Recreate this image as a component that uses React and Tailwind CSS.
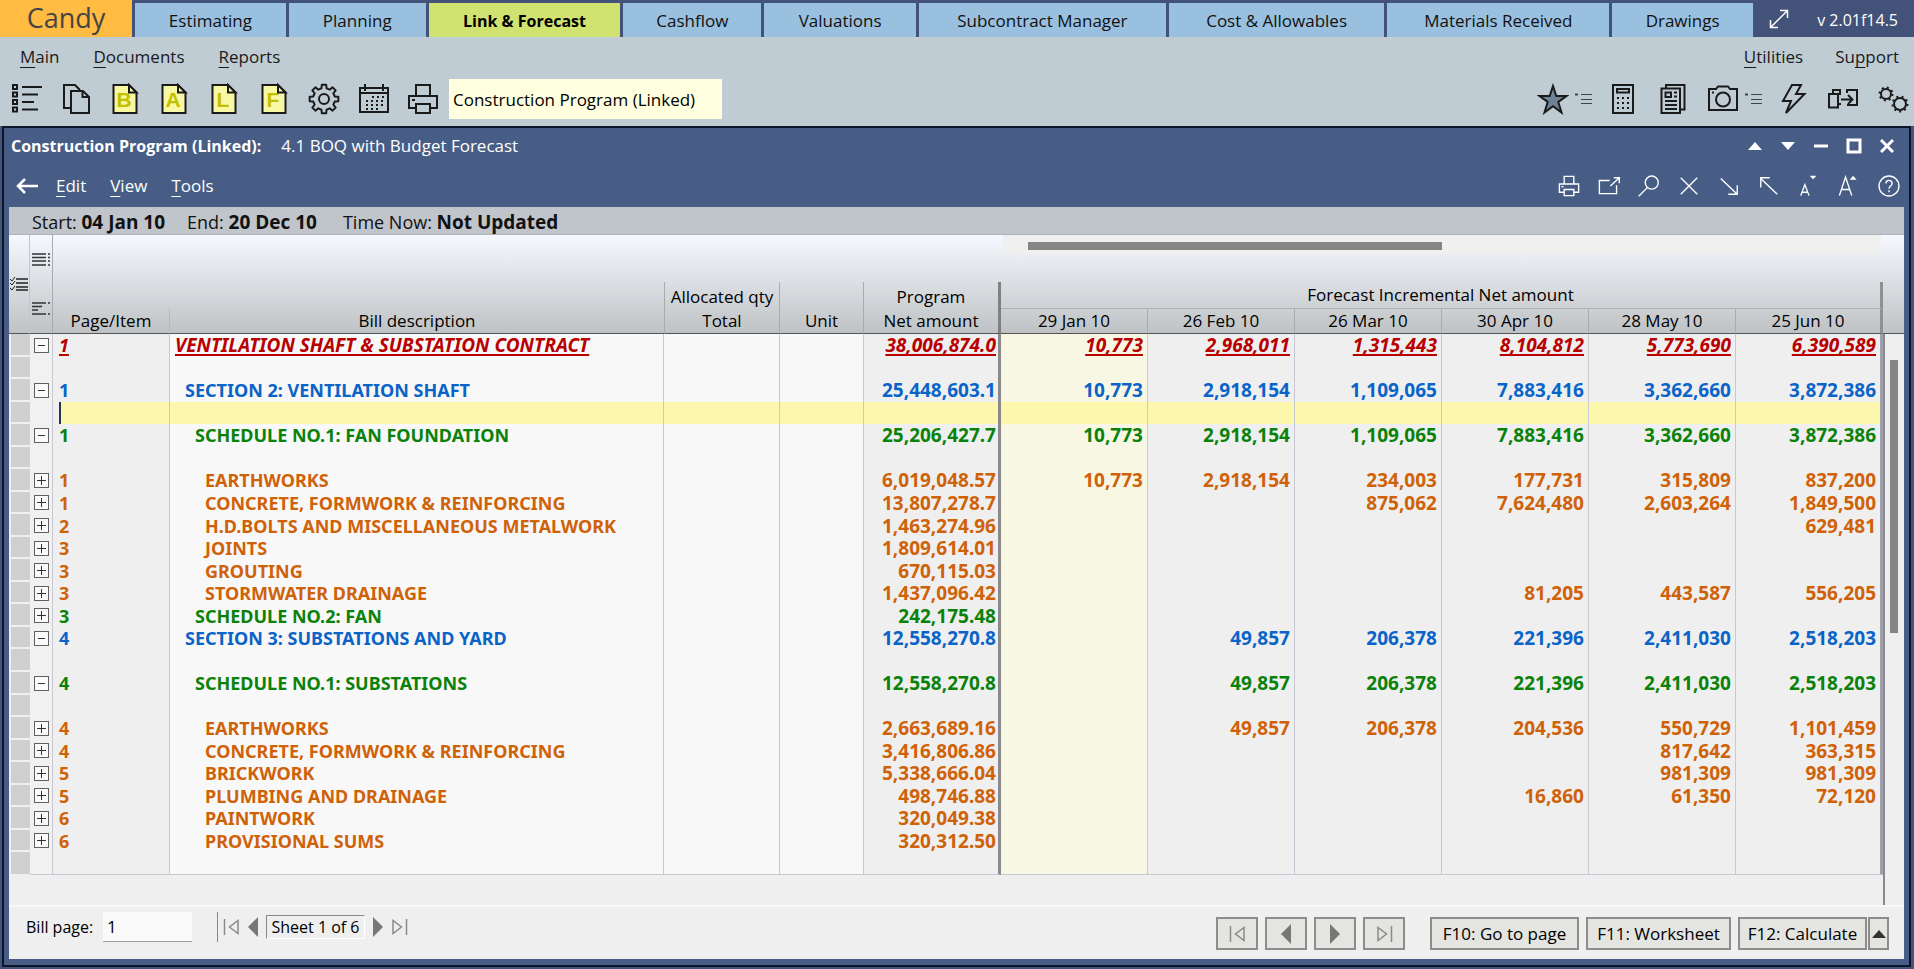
import { useState } from "react";

const tabs = [
  { name: "Estimating", size: "flex-[151]" },
  { name: "Planning", size: "flex-[137]" },
  { name: "Link & Forecast", size: "flex-[192]" },
  { name: "Cashflow", size: "flex-[138]" },
  { name: "Valuations", size: "flex-[152]" },
  { name: "Subcontract Manager", size: "flex-[247]" },
  { name: "Cost & Allowables", size: "flex-[216]" },
  { name: "Materials Received", size: "flex-[222]" },
  { name: "Drawings", size: "flex-[141]" },
];

const months = ["29 Jan 10", "26 Feb 10", "26 Mar 10", "30 Apr 10", "28 May 10", "25 Jun 10"];

// level: 0 contract, 1 section, 2 schedule, 3 trade
const rows = [
  { open: true, page: "1", level: 0, text: "VENTILATION SHAFT & SUBSTATION CONTRACT", net: "38,006,874.0", values: ["10,773", "2,968,011", "1,315,443", "8,104,812", "5,773,690", "6,390,589"] },
  {},
  { open: true, page: "1", level: 1, text: "SECTION 2: VENTILATION SHAFT", net: "25,448,603.1", values: ["10,773", "2,918,154", "1,109,065", "7,883,416", "3,362,660", "3,872,386"] },
  { cursor: true },
  { open: true, page: "1", level: 2, text: "SCHEDULE NO.1: FAN FOUNDATION", net: "25,206,427.7", values: ["10,773", "2,918,154", "1,109,065", "7,883,416", "3,362,660", "3,872,386"] },
  {},
  { page: "1", level: 3, text: "EARTHWORKS", net: "6,019,048.57", values: ["10,773", "2,918,154", "234,003", "177,731", "315,809", "837,200"] },
  { page: "1", level: 3, text: "CONCRETE, FORMWORK & REINFORCING", net: "13,807,278.7", values: ["", "", "875,062", "7,624,480", "2,603,264", "1,849,500"] },
  { page: "2", level: 3, text: "H.D.BOLTS AND MISCELLANEOUS METALWORK", net: "1,463,274.96", values: ["", "", "", "", "", "629,481"] },
  { page: "3", level: 3, text: "JOINTS", net: "1,809,614.01" },
  { page: "3", level: 3, text: "GROUTING", net: "670,115.03" },
  { page: "3", level: 3, text: "STORMWATER DRAINAGE", net: "1,437,096.42", values: ["", "", "", "81,205", "443,587", "556,205"] },
  { page: "3", level: 2, text: "SCHEDULE NO.2: FAN", net: "242,175.48" },
  { open: true, page: "4", level: 1, text: "SECTION 3: SUBSTATIONS AND YARD", net: "12,558,270.8", values: ["", "49,857", "206,378", "221,396", "2,411,030", "2,518,203"] },
  {},
  { open: true, page: "4", level: 2, text: "SCHEDULE NO.1: SUBSTATIONS", net: "12,558,270.8", values: ["", "49,857", "206,378", "221,396", "2,411,030", "2,518,203"] },
  {},
  { page: "4", level: 3, text: "EARTHWORKS", net: "2,663,689.16", values: ["", "49,857", "206,378", "204,536", "550,729", "1,101,459"] },
  { page: "4", level: 3, text: "CONCRETE, FORMWORK & REINFORCING", net: "3,416,806.86", values: ["", "", "", "", "817,642", "363,315"] },
  { page: "5", level: 3, text: "BRICKWORK", net: "5,338,666.04", values: ["", "", "", "", "981,309", "981,309"] },
  { page: "5", level: 3, text: "PLUMBING AND DRAINAGE", net: "498,746.88", values: ["", "", "", "16,860", "61,350", "72,120"] },
  { page: "6", level: 3, text: "PAINTWORK", net: "320,049.38" },
  { page: "6", level: 3, text: "PROVISIONAL SUMS", net: "320,312.50" },
  {},
];

const levelColor = [
  "text-[#b80000] italic underline underline-offset-2 decoration-2",
  "text-[#0a64c8]",
  "text-[#0a820a]",
  "text-[#cf6208]",
];
const levelIndent = ["pl-[5px] text-[19px]", "pl-[15px]", "pl-[25px]", "pl-[35px]"];

// Outline of a cog wheel around (cx, cy)
const cogPath = (cx, cy, teeth, outer, inner) => {
  const step = (Math.PI * 2) / teeth;
  const points = [];
  for (let i = 0; i < teeth; i++) {
    const a = i * step - Math.PI / 2;
    [
      [-0.3, inner],
      [-0.19, outer],
      [0.19, outer],
      [0.3, inner],
    ].forEach(([k, r]) => {
      points.push(
        `${(cx + r * Math.cos(a + k * step)).toFixed(2)} ${(cy + r * Math.sin(a + k * step)).toFixed(2)}`,
      );
    });
  }
  return `M${points.join("L")}Z`;
};

const Icon = ({ children, className = "size-8" }) => (
  <svg viewBox="0 0 32 32" className={`${className} shrink-0`} fill="none" stroke="currentColor" strokeWidth="2">
    {children}
  </svg>
);

const ListIcon = () => (
  <Icon>
    {[3.5, 11, 18.5, 26].map((y) => (
      <rect key={y} x="2" y={y - 1.5} width="4" height="4" />
    ))}
    <path d="M11 4H31M11 11.5H27M11 19H23M11 26.5H27" />
  </Icon>
);

const CopyIcon = () => (
  <Icon>
    <path d="M11 25H4V2H15L20 7M11 8H23L29 14V30H11ZM22.5 8V14H29" />
  </Icon>
);

const SheetIcon = ({ letter }) => (
  <Icon>
    <path d="M3.5 2H19L26.5 9.5V30H3.5Z" fill="#f8f8a4" />
    <text x="14" y="23.5" textAnchor="middle" fill="#c2c000" stroke="none" className="font-['Liberation_Sans',sans-serif] text-[21px] font-bold">
      {letter}
    </text>
    <path d="M19 2V9.5H26.5Z" fill="#f8f8a4" />
  </Icon>
);

const GearIcon = () => (
  <Icon>
    <path d={cogPath(16, 16, 8, 14.5, 11)} strokeLinejoin="round" />
    <circle cx="16" cy="16" r="5" />
  </Icon>
);

const CalendarIcon = () => (
  <Icon>
    <path d="M2 5H30V29H2ZM2 10H30M7 1V8M25 1V8" />
    <path d="M14 14H26M8 18H26M8 22H26M8 26H20" strokeDasharray="2 3" />
  </Icon>
);

const PrinterIcon = ({ className }) => (
  <Icon className={className}>
    <path d="M9 13V2H23V13M9 25H2V13H30V25H23M9 21H23V30H9Z" />
    <path d="M5 17H8" />
  </Icon>
);

const StarIcon = () => (
  <Icon>
    <path d="M16 3L19.3 13H29.5L21.3 19L24.5 29.5L16 23.2L7.5 29.5L10.7 19L2.5 13H12.7Z" fill="#6e8295" />
  </Icon>
);

const SmallListIcon = () => (
  <svg viewBox="0 0 17 12" className="h-3 w-[17px] shrink-0" fill="none" stroke="#3d464c" strokeWidth="1">
    <path d="M6 1.500H17M6 6.500H17M6 10.500H17" />
    <path d="M0 1.500H3" strokeWidth="2" />
  </svg>
);

const CalculatorIcon = () => (
  <Icon>
    <path d="M6 2H26V30H6ZM10 6H22V9.500H10Z" />
    <path d="M10 15H24M10 20H24M10 25H24" strokeDasharray="2 3" />
  </Icon>
);

const NewsIcon = () => (
  <Icon>
    <path d="M4.500 5.500H23V30H4.500ZM9 5V2H27.500V26.500H23" />
    <path d="M8.500 9.500H14V14H8.500ZM17 9.500H20M17 13.500H20M8 18H20M8 22H20M8 26H20" />
  </Icon>
);

const CameraIcon = () => (
  <Icon>
    <path d="M2 6H9L11 3.500H21L23 6H30V27H2Z" />
    <circle cx="16" cy="16.500" r="7" />
    <path d="M5 9.500H7" />
  </Icon>
);

const BoltIcon = () => (
  <Icon>
    <path d="M15 2H24L19 11H27.500L9 30L14 18H6Z" />
  </Icon>
);

const TransferIcon = () => (
  <Icon>
    <path d="M2 11H11V24.500H2ZM6 11V7H13V12M11 21H14M14 16.500H25M21 12L25.500 16.500L21 21M20 10V7H30V22H20" />
  </Icon>
);

const GearsIcon = () => (
  <Icon>
    <circle cx="9" cy="11" r="5" />
    <circle cx="9" cy="11" r="6.500" strokeDasharray="2 3.100" />
    <circle cx="23" cy="21" r="6" />
    <circle cx="23" cy="21" r="7.500" strokeDasharray="2 3.236" />
  </Icon>
);

const IconButton = ({ label, className = "w-8", children }) => (
  <button type="button" aria-label={label} className={`${className} flex h-8 items-center justify-center`}>
    {children}
  </button>
);

const MenuItem = ({ before = "", hot, rest }) => (
  <button type="button" className="leading-6">
    {before}
    <span className="underline underline-offset-4">{hot}</span>
    {rest}
  </button>
);

const FirstIcon = () => (
  <svg viewBox="0 0 17 16" className="h-4 w-[17px]" fill="none" stroke="#8a8a8a" strokeWidth="1.500">
    <path d="M1.500 0V16M15 1.500V14.500L6.500 8Z" />
  </svg>
);

const LastIcon = () => (
  <svg viewBox="0 0 17 16" className="h-4 w-[17px]" fill="none" stroke="#8a8a8a" strokeWidth="1.500">
    <path d="M15.500 0V16M2 1.500V14.500L10.500 8Z" />
  </svg>
);

const PrevIcon = () => (
  <svg viewBox="0 0 10 20" className="h-5 w-[10px]" fill="#777">
    <path d="M10 0V20L0 10Z" />
  </svg>
);

const NextIcon = () => (
  <svg viewBox="0 0 10 20" className="h-5 w-[10px]" fill="#777">
    <path d="M0 0V20L10 10Z" />
  </svg>
);

const TopBar = () => (
  <nav className="flex h-[37px] bg-[#435278] text-[17px] text-[#111]">
    <a href="#candy" className="flex w-[132px] items-center justify-center bg-[#ffbb42] text-[27px] font-medium text-[#444]">
      Candy
    </a>
    <div className="ml-[3px] flex flex-1 gap-[3px] pt-[3px]">
      {tabs.map((tab) => (
        <a
          key={tab.name}
          href="#tab"
          className={`${tab.size} flex items-center justify-center pt-px whitespace-nowrap ${
            tab.name === "Link & Forecast" ? "bg-[#d0e270] text-[16px] font-bold text-black" : "bg-[#99c0de]"
          }`}
        >
          {tab.name}
        </a>
      ))}
    </div>
    <div className="flex w-[161px] items-center justify-between pr-4 pl-4 text-[16px] text-white">
      <button type="button" aria-label="Expand">
        <svg viewBox="0 0 20 20" className="size-5" fill="none" stroke="currentColor" strokeWidth="1.500">
          <path d="M2 18L18 2M11 1.500H18.500V9M1.500 11V18.500H9" />
        </svg>
      </button>
      <span className="pt-[3px]">v 2.01f14.5</span>
    </div>
  </nav>
);

const Toolbar = () => {
  const [program, setProgram] = useState("Construction Program (Linked)");

  return (
    <div className="flex h-[89px] flex-col bg-[#c0ccd4] text-[17px] text-[#1a1a1a]">
      <div className="flex h-10 items-center justify-between pr-[15px] pl-5">
        <div className="flex gap-[34px]">
          <MenuItem hot="M" rest="ain" />
          <MenuItem hot="D" rest="ocuments" />
          <MenuItem hot="R" rest="eports" />
        </div>
        <div className="flex gap-8">
          <MenuItem hot="U" rest="tilities" />
          <MenuItem before="Su" hot="p" rest="port" />
        </div>
      </div>
      <div className="flex h-[44px] items-center justify-between pr-[5px] pl-[2px]">
        <div className="flex items-center">
          <div className="flex w-[446px] *:flex-1">
            <IconButton label="List"><ListIcon /></IconButton>
            <IconButton label="Documents"><CopyIcon /></IconButton>
            <IconButton label="Bill"><SheetIcon letter="B" /></IconButton>
            <IconButton label="Activities"><SheetIcon letter="A" /></IconButton>
            <IconButton label="Links"><SheetIcon letter="L" /></IconButton>
            <IconButton label="Forecast"><SheetIcon letter="F" /></IconButton>
            <IconButton label="Settings"><GearIcon /></IconButton>
            <IconButton label="Calendar"><CalendarIcon /></IconButton>
            <IconButton label="Print"><PrinterIcon /></IconButton>
          </div>
          <input
            aria-label="Program"
            value={program}
            onChange={(e) => setProgram(e.target.value)}
            className="ml-px h-10 w-[273px] bg-[#ffffdf] px-1 text-black outline-none"
          />
        </div>
        <div className="flex gap-[18px]">
          <div className="flex w-[52px] items-center gap-[6px]">
            <IconButton label="Favourites"><StarIcon /></IconButton>
            <SmallListIcon />
          </div>
          <IconButton label="Calculator"><CalculatorIcon /></IconButton>
          <IconButton label="News"><NewsIcon /></IconButton>
          <div className="flex w-[52px] items-center gap-[6px]">
            <IconButton label="Snapshot"><CameraIcon /></IconButton>
            <SmallListIcon />
          </div>
          <IconButton label="Quick"><BoltIcon /></IconButton>
          <IconButton label="Transfer"><TransferIcon /></IconButton>
          <IconButton label="Options"><GearsIcon /></IconButton>
        </div>
      </div>
    </div>
  );
};

const WindowHeader = () => (
  <header className="text-[17px] text-white">
    <div className="flex h-9 items-center justify-between pr-[6px]">
      <div className="flex items-baseline gap-5 pl-[7px]">
        <h1 className="text-[16px] font-bold">Construction Program (Linked):</h1>
        <span>4.1 BOQ with Budget Forecast</span>
      </div>
      <div className="flex">
        <IconButton label="Roll up" className="w-[33px]">
          <svg viewBox="0 0 14 14" className="size-[14px]" fill="currentColor"><path d="M0 11L7 3L14 11Z" /></svg>
        </IconButton>
        <IconButton label="Roll down" className="w-[33px]">
          <svg viewBox="0 0 14 14" className="size-[14px]" fill="currentColor"><path d="M0 3L7 11L14 3Z" /></svg>
        </IconButton>
        <IconButton label="Minimise" className="w-[33px]">
          <svg viewBox="0 0 14 14" className="size-[14px]" stroke="currentColor" strokeWidth="3"><path d="M0 7H14" /></svg>
        </IconButton>
        <IconButton label="Maximise" className="w-[33px]">
          <svg viewBox="0 0 16 16" className="size-4" fill="none" stroke="currentColor" strokeWidth="3"><path d="M2 2H14V14H2Z" /></svg>
        </IconButton>
        <IconButton label="Close" className="w-[33px]">
          <svg viewBox="0 0 14 14" className="size-[14px]" stroke="currentColor" strokeWidth="3"><path d="M1 1L13 13M13 1L1 13" /></svg>
        </IconButton>
      </div>
    </div>
    <div className="flex h-[43px] items-center justify-between">
      <div className="flex items-center gap-6 pl-3">
        <div className="flex items-center gap-[18px]">
          <button type="button" aria-label="Back">
            <svg viewBox="0 0 22 16" className="h-4 w-[22px]" fill="none" stroke="currentColor" strokeWidth="2.500">
              <path d="M1.500 8H22M9 1L2 8L9 15" />
            </svg>
          </button>
          <MenuItem hot="E" rest="dit" />
        </div>
        <MenuItem hot="V" rest="iew" />
        <MenuItem hot="T" rest="ools" />
      </div>
      <div className="flex">
        <IconButton label="Print" className="w-10"><PrinterIcon className="size-[22px]" /></IconButton>
        <IconButton label="Open in window" className="w-10">
          <Icon className="size-[22px]"><path d="M17 8H2V27H27V15M18 16L31 4M23 4H31V12" /></Icon>
        </IconButton>
        <IconButton label="Find" className="w-10">
          <Icon className="size-[22px]"><circle cx="20" cy="11" r="9.500" /><path d="M14 18L1 31" /></Icon>
        </IconButton>
        <IconButton label="Clear" className="w-10">
          <Icon className="size-[22px]"><path d="M4 4L28 28M28 4L4 28" /></Icon>
        </IconButton>
        <IconButton label="Expand" className="w-10">
          <Icon className="size-[22px]"><path d="M4 5L28 28M28 15V28H15" /></Icon>
        </IconButton>
        <IconButton label="Collapse" className="w-10">
          <Icon className="size-[22px]"><path d="M28 28L4 5M4 18V4H17" /></Icon>
        </IconButton>
        <IconButton label="Smaller text" className="w-10">
          <Icon className="size-[22px]">
            <path d="M4 30L10 14L16 30M6 25H14" />
            <path d="M17 1H27L22 6Z" fill="currentColor" stroke="none" />
          </Icon>
        </IconButton>
        <IconButton label="Larger text" className="w-10">
          <Icon className="size-[22px]">
            <path d="M2 30L11 3L20 30M5 21H17" />
            <path d="M17 7H27L22 1Z" fill="currentColor" stroke="none" />
          </Icon>
        </IconButton>
        <IconButton label="Help" className="w-10">
          <Icon className="size-[22px]">
            <circle cx="16" cy="16" r="14.500" />
            <path d="M11.500 12.500C11.500 6 20.500 6.500 20.500 12.500C20.500 16 16 16 16 20M16 22V25" />
          </Icon>
        </IconButton>
      </div>
    </div>
  </header>
);

const InfoBar = () => (
  <div className="flex h-7 items-center gap-[22px] border-b border-[#b0b2b8] bg-[#c0c4cb] pt-1 pl-[23px] text-[18px] text-[#111] [&_b]:text-[19px]">
    <span>Start: <b>04 Jan 10</b></span>
    <span>End: <b>20 Dec 10</b></span>
    <span className="ml-1">Time Now: <b>Not Updated</b></span>
  </div>
);

const BillTable = () => (
  <table className="h-full w-full table-fixed border-separate border-spacing-0">
    <colgroup>
      <col className="w-[21px]" />
      <col className="w-[23px]" />
      <col className="w-[117px]" />
      <col />
      <col className="w-[116px]" />
      <col className="w-[84px]" />
      <col className="w-[137px]" />
      <col className="w-[147px]" />
      <col className="w-[147px]" />
      <col className="w-[147px]" />
      <col className="w-[147px]" />
      <col className="w-[147px]" />
      <col className="w-[147px]" />
    </colgroup>
    <thead className="text-[17px] leading-6 text-black [&_th]:font-medium">
      <tr className="h-[47px]">
        <td rowSpan={3} className="border-r border-b border-r-[#c4c6ca] border-b-[#555]">
          <button type="button" aria-label="Select rows" className="flex w-full justify-center">
            <svg viewBox="0 0 18 14" className="h-[14px] w-[18px]" stroke="#222" strokeWidth="1.500">
              <path d="M6 2H18M6 6H18M6 10H18M6 13H18" />
              <path d="M0 2L2 4L5 0M0 6L2 8L5 4M0 11L2 13L5 9" fill="none" strokeWidth="1" />
            </svg>
          </button>
        </td>
        <td rowSpan={3} className="border-r border-b border-r-[#a8abb0] border-b-[#555]">
          <div className="flex flex-col items-center gap-9">
            <button type="button" aria-label="Expand all">
              <svg viewBox="0 0 18 13" className="h-[13px] w-[18px]" stroke="#333" strokeWidth="1.500">
                <path d="M0 1H14M0 4.500H14M0 8H14M0 12H14M16 1H18M16 4.500H18M16 8H18M16 12H18" />
              </svg>
            </button>
            <button type="button" aria-label="Collapse all">
              <svg viewBox="0 0 18 13" className="h-[13px] w-[18px]" stroke="#333" strokeWidth="1.500">
                <path d="M0 1H14M0 4.500H10M0 8H6M0 12H14M16 1H18M16 12H18" />
              </svg>
            </button>
          </div>
        </td>
        <td colSpan={5} />
        <td colSpan={6} className="pr-[2px] pl-[2px] align-top">
          <div role="scrollbar" aria-label="Months" aria-controls="bill" aria-valuenow={0} className="h-[19px] bg-[#f0f0f0] pt-[7px] pl-[25px]">
            <div className="h-2 w-[48.5%] bg-[#858585]" />
          </div>
        </td>
      </tr>
      <tr className="h-[27px]">
        <td colSpan={2} />
        <th rowSpan={2} className="border-r border-b border-l border-x-[#a8abb0] border-b-[#555] align-bottom">
          Allocated qty<br />Total
        </th>
        <th rowSpan={2} className="border-r border-b border-r-[#a8abb0] border-b-[#555] align-bottom">Unit</th>
        <th rowSpan={2} className="border-r-3 border-b border-r-[#808080] border-b-[#555] align-bottom">
          Program<br />Net amount
        </th>
        <th colSpan={6} className="border-r-3 border-b border-r-[#909090] border-b-[#b0b3b6] align-middle">
          Forecast Incremental Net amount
        </th>
      </tr>
      <tr className="h-[25px]">
        <th className="border-r border-b border-r-[#b5b8bc] border-b-[#555] align-bottom">Page/Item</th>
        <th className="border-b border-[#555] align-bottom">Bill description</th>
        {months.map((month) => (
          <th key={month} className="border-r border-b border-r-[#a8abb0] border-b-[#555] align-bottom last:border-r-3 last:border-r-[#909090]">
            {month}
          </th>
        ))}
      </tr>
    </thead>
    <tbody id="bill" className="font-['Noto_Sans',sans-serif] text-[18px] leading-5 font-bold whitespace-nowrap [&_td]:border-[#c8c8d4] [&_tr:last-child>td]:border-b">
      {rows.map((row, i) => {
        const color = row.text ? levelColor[row.level] : "";
        const plain = row.cursor ? "bg-[#fdf7ae]" : "bg-[#f8f8f8]";
        const shaded = row.cursor ? "bg-[#fdf7ae]" : "bg-[#efefef]";
        const current = row.cursor ? "bg-[#fdf7ae]" : "bg-[#f7f7e4]";

        return (
          <tr key={i} className="h-[22px]">
            <td className="border-b-2 border-l-2 border-[#efefef]! bg-[#cfcfcf]" />
            <td className="border-r bg-[#f1f1f1]">
              {row.text && (
                <button
                  type="button"
                  aria-label={row.open ? "Collapse" : "Expand"}
                  className="mx-auto flex size-[15px] items-center justify-center border border-[#606060] bg-[#fafafa]"
                >
                  <svg viewBox="0 0 9 9" className="size-[9px]" stroke="#333" strokeWidth="1">
                    <path d={row.open ? "M1 4.500H8" : "M0 4.500H9M4.500 0V9"} />
                  </svg>
                </button>
              )}
            </td>
            <td className={`border-r bg-[#efefef] pl-[6px] ${color}`}>
              {row.cursor ? (
                <input aria-label="Page/Item" className="block h-[22px] w-full border-l-2 border-[#2c3550] bg-[#fdf7ae] outline-none" />
              ) : (
                row.page
              )}
            </td>
            <td className={`border-r ${plain} ${row.text ? levelIndent[row.level] : ""} ${color}`}>{row.text}</td>
            <td className={`border-r ${plain}`} />
            <td className={`border-r ${plain}`} />
            <td className={`border-r-3 border-r-[#8a8a8a]! pr-[2px] text-right text-[19px] ${shaded} ${color}`}>{row.net}</td>
            {months.map((month, m) => (
              <td
                key={month}
                className={`border-r pr-1 text-right text-[19px] last:border-r-3 last:border-r-[#a0a0aa]! ${m === 0 ? current : shaded} ${color}`}
              >
                {row.values?.[m]}
              </td>
            ))}
          </tr>
        );
      })}
    </tbody>
  </table>
);

const Footer = () => {
  const [page, setPage] = useState("1");
  const pager = "flex h-[33px] w-[42px] items-center justify-center border-2 border-[#8c8c8c] bg-[#e4e4e0]";
  const action = "flex h-[33px] items-center justify-center border-2 border-[#8c8c8c] bg-[#e4e4e0]";

  return (
    <footer className="flex h-[54px] items-start justify-between border-t-2 border-[#f9f9f9] bg-[#efefef] pr-[15px] pl-[17px] text-[17px] text-black">
      <div className="flex items-center pt-[5px]">
        <label htmlFor="bill-page" className="w-[77px] text-[16px]">Bill page:</label>
        <input
          id="bill-page"
          value={page}
          onChange={(e) => setPage(e.target.value)}
          className="h-[30px] w-[89px] border-b border-[#a0a0a0] bg-[#fafafa] px-1 outline-none"
        />
        <div className="ml-[25px] flex h-[30px] items-center gap-2 border-l border-[#888] pl-[5px]">
          <button type="button" aria-label="First sheet"><FirstIcon /></button>
          <button type="button" aria-label="Previous sheet"><PrevIcon /></button>
          <span className="flex h-6 w-[99px] items-center justify-center border border-t-[#888] border-r-white border-b-white border-l-[#888] text-[16px] whitespace-nowrap">
            Sheet 1 of 6
          </span>
          <button type="button" aria-label="Next sheet"><NextIcon /></button>
          <button type="button" aria-label="Last sheet"><LastIcon /></button>
        </div>
      </div>
      <div className="flex gap-[7px] pt-[10px]">
        <button type="button" aria-label="First" className={pager}><FirstIcon /></button>
        <button type="button" aria-label="Previous" className={pager}><PrevIcon /></button>
        <button type="button" aria-label="Next" className={pager}><NextIcon /></button>
        <button type="button" aria-label="Last" className={pager}><LastIcon /></button>
        <button type="button" className={`${action} ml-[18px] w-[149px]`}>F10: Go to page</button>
        <button type="button" className={`${action} w-[145px]`}>F11: Worksheet</button>
        <div className="flex gap-px">
          <button type="button" className={`${action} w-[129px]`}>F12: Calculate</button>
          <button type="button" aria-label="More" className={`${action} w-[21px]`}>
            <svg viewBox="0 0 14 8" className="h-2 w-[14px]" fill="#333"><path d="M0 8L7 0L14 8Z" /></svg>
          </button>
        </div>
      </div>
    </footer>
  );
};

const App = () => (
  <div className="flex h-screen flex-col bg-[#44547a] font-['Open_Sans',sans-serif]">
    <TopBar />
    <Toolbar />
    <main className="mr-[3px] mb-[2px] ml-[2px] flex min-h-0 flex-1 flex-col border-2 border-[#0b1428] bg-[#475d85]">
      <WindowHeader />
      <div className="mr-[5px] mb-[6px] ml-[5px] flex min-h-0 flex-1 flex-col bg-[#efefef]">
        <InfoBar />
        <div className="flex min-h-0 flex-1 bg-[linear-gradient(#f5f9ff,#bfc2c4)] bg-[length:100%_99px] bg-no-repeat">
          <div className="min-w-0 flex-1 pb-[30px]">
            <BillTable />
          </div>
          <div className="flex w-[21px] flex-col">
            <div className="h-[99px] border-b border-[#555]" />
            <div role="scrollbar" aria-label="Rows" aria-controls="bill" aria-valuenow={0} className="flex-1 border-l-2 border-[#8a8a92] pt-[26px] pl-[5px]">
              <div className="h-1/2 w-2 bg-[#858585]" />
            </div>
          </div>
        </div>
        <Footer />
      </div>
    </main>
  </div>
);

export default App;
